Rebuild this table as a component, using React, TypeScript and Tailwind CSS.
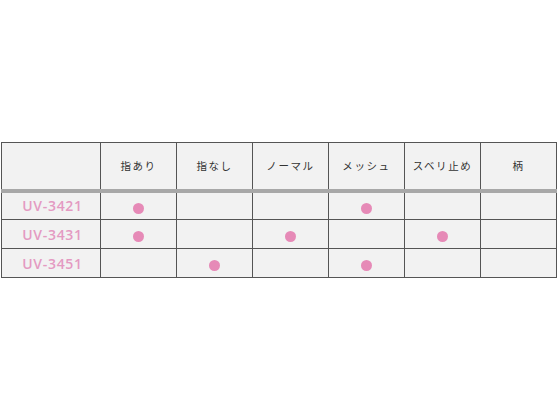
const columns = ["指あり", "指なし", "ノーマル", "メッシュ", "スベリ止め", "柄"];

const rows = [
  { name: "UV-3421", marks: [true, false, false, true, false, false] },
  { name: "UV-3431", marks: [true, false, true, false, true, false] },
  { name: "UV-3451", marks: [false, true, false, true, false, false] },
];

export default function App() {
  return (
    <div className="h-[420px] w-[560px] bg-white pt-[142px] pl-[1px]">
      <table
        className="table-fixed border-collapse bg-[#f2f2f2] text-[#333]"
        style={{ fontFamily: '"Noto Sans CJK JP", "Noto Sans", sans-serif' }}
      >
        <thead>
          <tr className="h-[48px] border-b-[4px] border-b-[#a8a8a8]">
            <th className="w-[99px] border border-[#555] border-b-[#a8a8a8]" />
            {columns.map((c) => (
              <th
                key={c}
                className="w-[76px] border border-[#555] border-b-[#a8a8a8] text-[10.5px] font-normal tracking-[0.15em]"
              >
                {c}
              </th>
            ))}
          </tr>
        </thead>
        <tbody>
          {rows.map((r) => (
            <tr key={r.name} className="h-[29px]">
              <td
                className="border border-[#555] pl-[3px] text-center text-[14px] font-semibold tracking-[0.05em] text-[#e49ac2]"
                style={{ fontFamily: '"Open Sans", "Noto Sans", sans-serif' }}
              >
                {r.name}
              </td>
              {r.marks.map((m, i) => (
                <td key={i} className="border border-[#555] text-center">
                  {m && (
                    <span className="inline-block size-[11px] rounded-full bg-[#e68ab7] align-middle" />
                  )}
                </td>
              ))}
            </tr>
          ))}
        </tbody>
      </table>
    </div>
  );
}
